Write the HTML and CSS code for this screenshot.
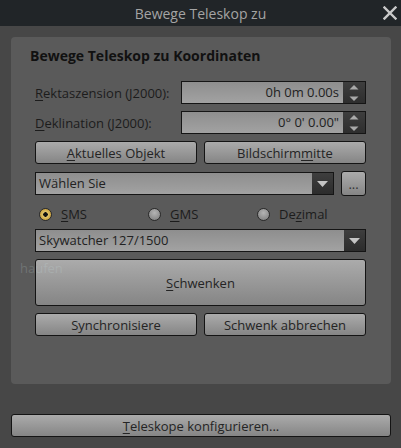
FILE: index.html
```html
<!DOCTYPE html>
<html lang="de">
<head>
    <meta charset="UTF-8">
    <meta name="viewport" content="width=device-width, initial-scale=1.0">
    <title>Bewege Teleskop zu</title>
    <link rel="stylesheet" href="styles.css">
</head>
<body>
    <div class="window">
        <div class="titlebar">
            <span class="title">Bewege Teleskop zu</span>
            <svg class="close" width="14" height="14" viewBox="0 0 14 14">
                <path d="M1.5 1.5 L12.5 12.5 M12.5 1.5 L1.5 12.5" stroke="#c9c9c9" stroke-width="2.4" stroke-linecap="square"/>
            </svg>
        </div>
        <div class="content">
            <span class="sky-label">haufen</span>
            <div class="group">
                <div class="group-title">Bewege Teleskop zu Koordinaten</div>

                <div class="row">
                    <label class="field-label"><u>R</u>ektaszension (J2000):</label>
                    <div class="spinbox">
                        <span class="spin-value">0h 0m 0.00s</span>
                        <span class="spin-arrows">
                            <svg width="10" height="18" viewBox="0 0 10 18">
                                <path d="M0.5 5.5 L5 1 L9.5 5.5 Z" fill="#a9a9a9"/>
                                <path d="M0.5 12.5 L5 17 L9.5 12.5 Z" fill="#a9a9a9"/>
                            </svg>
                        </span>
                    </div>
                </div>

                <div class="row">
                    <label class="field-label"><u>D</u>eklination (J2000):</label>
                    <div class="spinbox">
                        <span class="spin-value">0° 0' 0.00"</span>
                        <span class="spin-arrows">
                            <svg width="10" height="18" viewBox="0 0 10 18">
                                <path d="M0.5 5.5 L5 1 L9.5 5.5 Z" fill="#a9a9a9"/>
                                <path d="M0.5 12.5 L5 17 L9.5 12.5 Z" fill="#a9a9a9"/>
                            </svg>
                        </span>
                    </div>
                </div>

                <div class="row two">
                    <button class="btn"><u>A</u>ktuelles Objekt</button>
                    <button class="btn">Bildschirm<u>m</u>itte</button>
                </div>

                <div class="row combo-row">
                    <div class="combo">
                        <span class="combo-text">Wählen Sie</span>
                        <span class="combo-arrow">
                            <svg width="11" height="6" viewBox="0 0 11 6"><path d="M0 0 L11 0 L5.5 6 Z" fill="#c4c4c4"/></svg>
                        </span>
                    </div>
                    <button class="btn dots">...</button>
                </div>

                <div class="radios">
                    <label class="radio"><span class="dot checked"></span><u>S</u>MS</label>
                    <label class="radio"><span class="dot"></span><u>G</u>MS</label>
                    <label class="radio"><span class="dot"></span>De<u>z</u>imal</label>
                </div>

                <div class="row">
                    <div class="combo">
                        <span class="combo-text">Skywatcher 127/1500</span>
                        <span class="combo-arrow">
                            <svg width="11" height="6" viewBox="0 0 11 6"><path d="M0 0 L11 0 L5.5 6 Z" fill="#c4c4c4"/></svg>
                        </span>
                    </div>
                </div>

                <div class="row">
                    <button class="btn big"><u>S</u>chwenken</button>
                </div>

                <div class="row two">
                    <button class="btn">Synchronisiere</button>
                    <button class="btn">Schwenk abbrechen</button>
                </div>
            </div>

            <button class="btn config"><u>T</u>eleskope konfigurieren...</button>
        </div>
    </div>
</body>
</html>
```

FILE: styles.css
```css
body {
    margin: 0;
    width: 401px;
    height: 448px;
    overflow: hidden;
    font-family: 'Open Sans', 'Noto Sans', sans-serif;
    font-size: 13px;
    color: #1c1c1c;
    background-color: #474747;
}
u {
    text-decoration-thickness: 1px;
    text-underline-offset: 2px;
}
.window {
    display: flex;
    flex-direction: column;
    height: 448px;
}
.titlebar {
    height: 26px;
    flex: none;
    display: flex;
    align-items: center;
    justify-content: center;
    position: relative;
    background-color: #212528;
}
.title {
    color: #a4a4a4;
    font-size: 14px;
}
.close {
    position: absolute;
    right: 4px;
    top: 6px;
}
.content {
    position: relative;
    flex: 1;
    padding: 11px 10px 0 11px;
}
/* sky label shining through the translucent panel */
.sky-label {
    position: absolute;
    left: 20px;
    top: 233px;
    z-index: 1;
    color: rgba(200, 225, 225, 0.2);
    font-size: 13px;
    pointer-events: none;
}
.group {
    position: relative;
    height: 347px;
    box-sizing: border-box;
    padding: 9px 25px 0 24px;
    background-color: #5a5a5a;
    border-radius: 4px;
}
.group-title {
    margin-left: -5px;
    font-weight: bold;
    font-size: 14px;
    line-height: 20px;
    color: #111;
    margin-bottom: 15px;
}
.row {
    display: flex;
    align-items: center;
    gap: 7px;
    margin-bottom: 7px;
}
.row.two .btn {
    flex: 1;
}
.field-label {
    width: 139px;
    flex: none;
    white-space: nowrap;
}
.spinbox {
    flex: 1;
    height: 23px;
    box-sizing: border-box;
    display: flex;
    border: 1px solid #151515;
    background: linear-gradient(#8e8e8e, #a2a2a2);
}
.spin-value {
    flex: 1;
    text-align: right;
    line-height: 21px;
    padding-right: 4px;
    color: #222;
}
.spin-arrows {
    width: 22px;
    display: flex;
    align-items: center;
    justify-content: center;
    background: linear-gradient(#3e3e3e, #2e2e2e);
}
.btn {
    height: 23px;
    padding: 0;
    font-family: inherit;
    font-size: 13px;
    color: #242424;
    border: 1px solid #141414;
    border-radius: 3px;
    background: linear-gradient(#ababab, #858585);
}
.btn.big {
    flex: 1;
    height: 47px;
}
.combo-row {
    margin-top: 7px;
}
.combo {
    flex: 1;
    height: 23px;
    box-sizing: border-box;
    display: flex;
    border: 1px solid #151515;
    background: linear-gradient(#8e8e8e, #a2a2a2);
}
.combo-text {
    flex: 1;
    line-height: 21px;
    padding-left: 3px;
    color: #222;
}
.combo-arrow {
    width: 21px;
    display: flex;
    align-items: center;
    justify-content: center;
    background: linear-gradient(#3e3e3e, #2c2c2c);
}
.btn.dots {
    width: 25px;
    height: 25px;
    flex: none;
    line-height: 12px;
    color: #333;
}
.radios {
    display: flex;
    height: 22px;
    align-items: center;
    margin: 0 0 4px 4px;
}
.radio {
    display: flex;
    align-items: center;
    width: 112px;
}
.dot {
    width: 13px;
    height: 13px;
    box-sizing: border-box;
    margin-right: 9px;
    border-radius: 50%;
    border: 1px solid #2a2a2a;
    background: radial-gradient(circle at 50% 35%, #b4b4b4, #7a7a7a);
}
.dot.checked {
    background: radial-gradient(circle, #111 0, #111 2px, #e2c66a 2.5px, #c69c3a 6px);
}
.btn.config {
    width: 100%;
    margin-top: 30px;
    display: block;
}
```
